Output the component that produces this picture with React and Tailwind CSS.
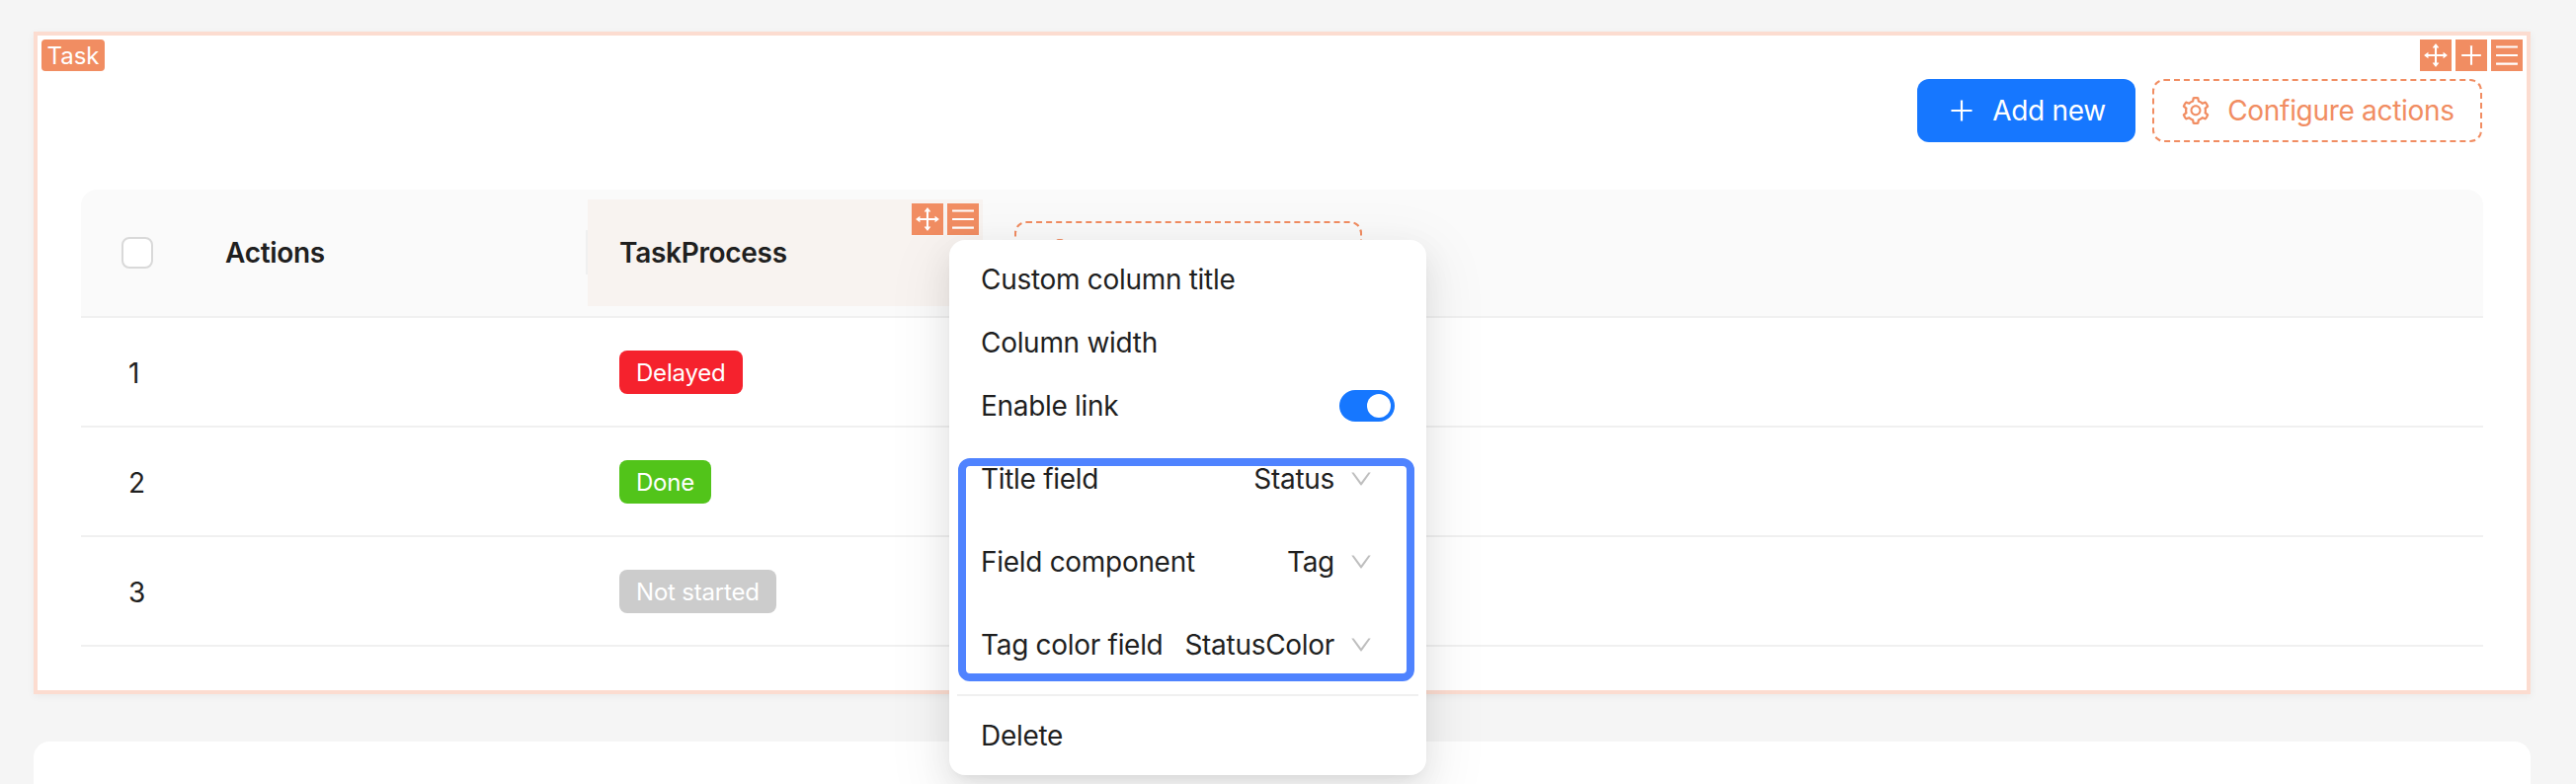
import { AiOutlineDrag, AiOutlinePlus, AiOutlineMenu, AiOutlineSetting, AiOutlineDown } from 'react-icons/ai';

function DesignerIcon({ icon: Icon, className = 'text-[28px]' }) {
  return (
    <span className={`flex h-8 w-8 items-center justify-center bg-[#f18d62] text-white ${className}`}>
      <Icon />
    </span>
  );
}

function Tag({ children, tone }) {
  const tones = {
    red: 'bg-[#f5222d]',
    green: 'bg-[#52c41a]',
    gray: 'bg-[#cccccc]',
  };
  return (
    <span className={`inline-flex h-11 items-center rounded-lg px-[17px] pt-[2px] text-2xl tracking-[-0.2px] text-white ${tones[tone]}`}>
      {children}
    </span>
  );
}

function MenuRow({ label, children, className = 'h-16' }) {
  return (
    <div className={`flex items-center justify-between pl-8 ${className}`}>
      <span>{label}</span>
      {children}
    </div>
  );
}

function SelectRow({ label, value }) {
  return (
    <MenuRow label={label} className="h-[84px]">
      <span className="flex items-center gap-[14px] pr-[53px]">
        <span>{value}</span>
        <AiOutlineDown className="text-[26px] text-[#bfbfbf]" />
      </span>
    </MenuRow>
  );
}

function ColumnMenu() {
  return (
    <div className="absolute left-[923px] top-[207px] w-[483px] rounded-2xl bg-white py-2 text-[28px] tracking-[-0.3px] text-[#1f1f1f] shadow-[0_12px_32px_rgba(0,0,0,0.08),0_6px_12px_-8px_rgba(0,0,0,0.12),0_18px_56px_16px_rgba(0,0,0,0.05)]">
      <MenuRow label="Custom column title" />
      <MenuRow label="Column width" />
      <MenuRow label="Enable link">
        <span className="mr-8 flex h-8 w-14 items-center justify-end rounded-full bg-[#1677ff] p-1">
          <span className="h-6 w-6 rounded-full bg-white" />
        </span>
      </MenuRow>
      <SelectRow label="Title field" value="Status" />
      <SelectRow label="Field component" value="Tag" />
      <SelectRow label="Tag color field" value="StatusColor" />
      <div className="mx-2 my-2 h-[2px] bg-[#f0f0f0]" />
      <MenuRow label="Delete" />
      <div className="pointer-events-none absolute left-[9px] top-[221px] h-[226px] w-[462px] rounded-xl border-8 border-[#4f83ff]" />
    </div>
  );
}

function TableRow({ index, children }) {
  return (
    <div className="flex h-[111px] items-center border-b-2 border-[#f0f0f0] text-[28px] text-[#1f1f1f]">
      <div className="w-[513px] pl-12 pt-[2px]">{index}</div>
      <div className="pl-8">{children}</div>
    </div>
  );
}

export default function App() {
  return (
    <div className="h-[794px] overflow-hidden bg-[#f5f5f5] pl-[34px] pr-[46px] pt-8 font-['Inter','Noto_Sans',sans-serif]">
      <div className="relative h-[671px] border-4 border-[#fcdcd0] bg-white pl-11 pr-11 pt-11 shadow-[0_2px_8px_rgba(0,0,0,0.05)]">
        <span className="absolute left-1 top-1 flex h-8 w-16 items-center justify-center rounded bg-[#f18d62] pt-[2px] text-2xl text-white">
          Task
        </span>
        <div className="absolute right-1 top-1 flex gap-1">
          <DesignerIcon icon={AiOutlineDrag} className="text-[30px]" />
          <DesignerIcon icon={AiOutlinePlus} />
          <DesignerIcon icon={AiOutlineMenu} />
        </div>

        <div className="mr-px flex justify-end gap-[17px] text-[28px] tracking-[-0.3px]">
          <button className="flex h-16 w-[221px] items-center justify-center gap-4 rounded-xl bg-[#1677ff] text-white">
            <AiOutlinePlus className="text-[30px]" />
            Add new
          </button>
          <button className="flex h-16 w-[334px] items-center justify-center gap-4 rounded-xl border-2 border-dashed border-[#f18d62] text-[#f18d62]">
            <AiOutlineSetting className="text-[32px]" />
            Configure actions
          </button>
        </div>

        <div className="mt-12">
          <div className="flex h-[130px] rounded-t-2xl border-b-2 border-[#f0f0f0] bg-[#fafafa] text-[28px] font-semibold tracking-[-0.3px] text-[#1f1f1f]">
            <div className="flex w-[513px] items-center pl-[41px]">
              <span className="h-8 w-8 rounded-lg border-2 border-[#d9d9d9] bg-white" />
              <span className="ml-[73px]">Actions</span>
            </div>
            <div className="relative mt-[10px] flex h-[108px] w-[400px] items-center bg-[#f8f3f0] pl-8">
              <span className="absolute -left-[2px] top-[31px] h-[45px] w-[2px] bg-[#f0f0f0]" />
              TaskProcess
              <div className="absolute right-1 top-1 flex gap-1">
                <DesignerIcon icon={AiOutlineDrag} className="text-[30px]" />
                <DesignerIcon icon={AiOutlineMenu} />
              </div>
            </div>
            <div className="ml-8 mt-8 flex h-16 w-[352px] items-center rounded-xl border-2 border-dashed border-[#f18d62] pl-[28px] text-[#f18d62]">
              <AiOutlineSetting className="text-[32px]" />
            </div>
          </div>
          <TableRow index="1"><Tag tone="red">Delayed</Tag></TableRow>
          <TableRow index="2"><Tag tone="green">Done</Tag></TableRow>
          <TableRow index="3"><Tag tone="gray">Not started</Tag></TableRow>
        </div>

        <ColumnMenu />
      </div>

      <div className="mt-12 h-24 rounded-t-2xl bg-white" />
    </div>
  );
}
